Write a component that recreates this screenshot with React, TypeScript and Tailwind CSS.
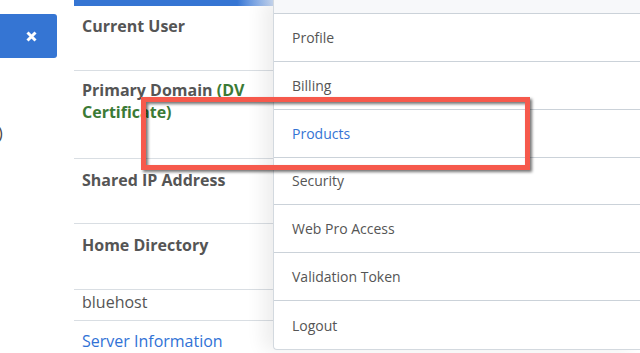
import React from "react";

const font = { fontFamily: '"Open Sans", "Noto Sans", sans-serif' };

function Row({ children, className = "" }: { children: React.ReactNode; className?: string }) {
  return (
    <div className={`border-b border-[#d9dee3] pl-2 ${className}`}>{children}</div>
  );
}

export default function App() {
  const items = ["Profile", "Billing", "Products", "Security", "Web Pro Access", "Validation Token", "Logout"];
  return (
    <div className="relative w-[640px] h-[353px] overflow-hidden bg-white" style={font}>
      <div className="flex h-full">
        {/* left column */}
        <div className="w-[74px] shrink-0 flex flex-col">
          <div className="mt-[14px] w-[57px] h-[44px] bg-[#3575d3] rounded-r-[3px] flex items-center justify-center pl-[6px]">
            <svg width="11" height="11" viewBox="0 0 11 11">
              <path d="M1.5 1.5 L9.5 9.5 M9.5 1.5 L1.5 9.5" stroke="white" strokeWidth="3" strokeLinecap="butt" />
            </svg>
          </div>
          <div className="mt-[64px] -ml-[2px] text-[16px] leading-[22px] text-[#444]">)</div>
        </div>

        {/* table column */}
        <div className="w-[199px] shrink-0 flex flex-col">
          <div className="h-[6px] bg-gradient-to-r from-[#3575d3] from-[82%] to-[#c9d9f2]" />
          <Row className="pt-[8px] h-[65px]">
            <span className="text-[16px] leading-[22px] font-bold text-[#555]">Current User</span>
          </Row>
          <Row className="pt-[8px] h-[88px]">
            <div className="text-[16px] leading-[22px] font-bold text-[#555]">
              Primary Domain <span className="text-[#3b7a35]">(DV Certificate)</span>
            </div>
          </Row>
          <Row className="pt-[9px] h-[66px]">
            <span className="text-[16px] leading-[22px] font-bold text-[#555]">Shared IP Address</span>
          </Row>
          <Row className="pt-[9px] h-[66px]">
            <span className="text-[16px] leading-[22px] font-bold text-[#555]">Home Directory</span>
          </Row>
          <Row className="h-[31px]">
            <span className="text-[16px] leading-[22px] text-[#555]">bluehost</span>
          </Row>
          <div className="pl-2 pt-[8px]">
            <span className="text-[16px] leading-[22px] text-[#3172d6]">Server Information</span>
          </div>
        </div>

        {/* dropdown */}
        <div className="flex-1 h-[350px] bg-white border-l border-b border-[#d3d9df] rounded-bl-[4px] shadow-[-10px_0_18px_rgba(0,0,0,0.07)] flex flex-col">
          <div className="h-[14px] bg-[#f7f8fa] border-b border-[#cbd2d9]" />
          {items.map((t, i) => (
            <div
              key={t}
              className={`h-[48px] flex items-center pl-[18px] text-[14px] ${
                i < items.length - 1 ? "border-b border-[#cbd2d9]" : ""
              } ${t === "Products" ? "text-[#3574d4]" : "text-[#555]"}`}
            >
              {t}
            </div>
          ))}
        </div>
      </div>

      {/* annotation highlight */}
      <div className="absolute left-[141px] top-[97px] w-[389px] h-[73px] border-[5px] border-[#f6594c] drop-shadow-[2px_2px_1.5px_rgba(0,0,0,0.55)]" />
    </div>
  );
}
